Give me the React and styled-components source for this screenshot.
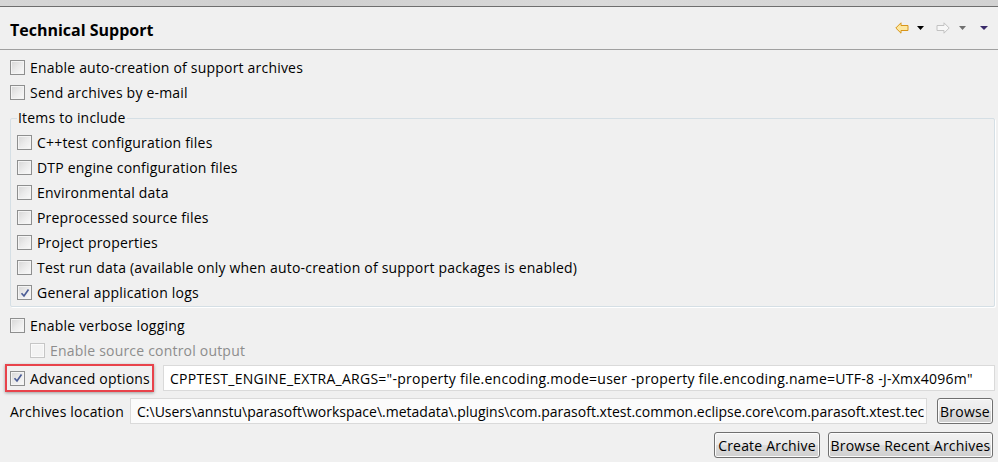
import React from "react";
import styled, { createGlobalStyle, css } from "styled-components";

const Global = createGlobalStyle`
  html, body { margin: 0; padding: 0; background: #f0f0f0; }
  body {
    font-family: "Open Sans", "Segoe UI", sans-serif;
    font-size: 14px;
    letter-spacing: 0.2px;
    color: #000;
    width: 998px;
    height: 462px;
    overflow: hidden;
  }
`;

const Page = styled.div`
  display: flex;
  flex-direction: column;
  width: 998px;
  height: 462px;
  background: #f0f0f0;
  & > * { flex: none; }
`;

const TopStrip = styled.div`
  height: 6px;
  background: linear-gradient(90deg, #d6d6d6, #cfcfcf 30%, #dadada 60%, #d2d2d2);
  border-bottom: 1px solid #6e6e6e;
`;

const Header = styled.div`
  height: 42px;
  display: flex;
  align-items: center;
  justify-content: space-between;
  padding: 0 10px;
  border-bottom: 1px solid #a0a0a0;
`;

const Title = styled.h1`
  margin: 0;
  font-size: 16px;
  font-weight: 700;
  letter-spacing: 0;
  padding-top: 4px;
`;

const Toolbar = styled.div`
  align-self: flex-start;
  display: flex;
  align-items: center;
  padding-top: 15px;
`;

const ToolIcon = styled.span`
  display: inline-flex;
  margin-left: ${(p) => p.$ml || 0}px;
`;

const Content = styled.div`
  display: flex;
  flex-direction: column;
  padding: 5px 3px 0 10px;
`;

const Row = styled.label`
  display: flex;
  align-items: center;
  height: 25px;
  gap: 5px;
  padding-left: ${(p) => p.$indent || 0}px;
  color: ${(p) => (p.$disabled ? "#8d8d8d" : "#000")};
  white-space: nowrap;
`;

const Box = styled.span`
  box-sizing: border-box;
  width: 15px;
  height: 15px;
  flex: none;
  border: 1px solid #8e8f8f;
  background: linear-gradient(135deg, #d6d6d6 0%, #ebebeb 50%, #fafafa 100%);
  box-shadow: inset 0 0 0 1px #f4f4f4;
  display: inline-flex;
  align-items: center;
  justify-content: center;
  ${(p) =>
    p.$disabled &&
    css`
      border-color: #c6c6c6;
      background: #f3f3f3;
      box-shadow: inset 0 0 0 1px #fafafa;
    `}
`;

const Group = styled.fieldset`
  margin: 4px 0 0 0;
  padding: 0 6px 1px 6px;
  border: 1px solid #d5dfe5;
  box-shadow: 1px 1px 0 #ffffff;
  border-radius: 2px;
  width: 985px;
  box-sizing: border-box;
  min-width: 0;
`;

const Legend = styled.legend`
  padding: 0 1px;
  line-height: 18px;
  margin-bottom: 3px;
`;

const Spacer = styled.div`
  height: ${(p) => p.$h}px;
`;

const AdvancedRow = styled.div`
  display: flex;
  align-items: center;
  gap: 9px;
  margin-left: -5px;
  margin-top: 1px;
`;

const Highlight = styled.div`
  box-sizing: border-box;
  width: 149px;
  height: 28px;
  border: 2px solid #e8434b;
  box-shadow: 0 1px 3px rgba(0, 0, 0, 0.35);
  display: flex;
  align-items: center;
  padding-left: 3px;
`;

const Field = styled.div`
  box-sizing: border-box;
  height: 26px;
  flex: ${(p) => (p.$w ? "none" : "1")};
  width: ${(p) => (p.$w ? p.$w + "px" : "auto")};
  border: 1px solid #dadada;
  background: ${(p) => (p.$readonly ? "#fbfbfb" : "#ffffff")};
  display: flex;
  align-items: center;
  padding-left: 6px;
  overflow: hidden;
  white-space: nowrap;
  letter-spacing: ${(p) => (p.$tight ? "0" : "0.25px")};
`;

const FieldText = styled.span`
  overflow: hidden;
  white-space: nowrap;
`;

const LocationRow = styled.div`
  display: flex;
  align-items: center;
  margin-top: 6px;
  gap: 8px;
  height: 26px;
`;

const LocLabel = styled.span`
  width: 112px;
  flex: none;
  white-space: nowrap;
`;

const Button = styled.button`
  box-sizing: border-box;
  height: 26px;
  width: ${(p) => p.$w}px;
  margin-left: ${(p) => p.$ml || 0}px;
  padding: 0;
  font: inherit;
  letter-spacing: inherit;
  color: #000;
  border: 1px solid #707070;
  border-radius: 3px;
  background: linear-gradient(#f2f2f2 0%, #ebebeb 49%, #dddddd 50%, #cfcfcf 100%);
  box-shadow: inset 0 0 0 1px #fcfcfc;
  white-space: nowrap;
  flex: none;
`;

const ButtonRow = styled.div`
  display: flex;
  justify-content: flex-end;
  gap: 8px;
  margin-top: 8px;
  padding-right: 2px;
`;

const Check = () => (
  <svg width="10" height="10" viewBox="0 0 10 10">
    <path d="M1.5 5.2 L4 8 L8.5 1.5" fill="none" stroke="#4b5d96" strokeWidth="1.7" />
  </svg>
);

const CheckRow = ({ children, checked, disabled, indent }) => (
  <Row $disabled={disabled} $indent={indent}>
    <Box $disabled={disabled}>{checked && <Check />}</Box>
    <span>{children}</span>
  </Row>
);

const BackArrow = () => (
  <svg width="14" height="12" viewBox="0 0 14 12">
    <path d="M0.8 6 L6 0.8 L6 3.5 L13 3.5 L13 8.5 L6 8.5 L6 11.2 Z" fill="#fde7a0" stroke="#d8951a" strokeWidth="1" strokeLinejoin="round" />
  </svg>
);

const FwdArrow = () => (
  <svg width="14" height="12" viewBox="0 0 14 12">
    <path d="M13.2 6 L8 0.8 L8 3.5 L1 3.5 L1 8.5 L8 8.5 L8 11.2 Z" fill="#f7f7f7" stroke="#c2c2c2" strokeWidth="1" strokeLinejoin="round" />
  </svg>
);

const Tri = ({ color, w = 7 }) => (
  <svg width={w} height="4" viewBox={`0 0 ${w} 4`}>
    <path d={`M0 0 L${w} 0 L${w / 2} 4 Z`} fill={color} />
  </svg>
);

export default function App() {
  return (
    <Page>
      <Global />
      <TopStrip />
      <Header>
        <Title>Technical Support</Title>
        <Toolbar>
          <ToolIcon><BackArrow /></ToolIcon>
          <ToolIcon $ml={8}><Tri color="#000" /></ToolIcon>
          <ToolIcon $ml={12}><FwdArrow /></ToolIcon>
          <ToolIcon $ml={9}><Tri color="#6f6f6f" /></ToolIcon>
          <ToolIcon $ml={14}><Tri color="#3a2a6a" w={8} /></ToolIcon>
        </Toolbar>
      </Header>
      <Content>
        <CheckRow>Enable auto-creation of support archives</CheckRow>
        <CheckRow>Send archives by e-mail</CheckRow>
        <Group>
          <Legend>Items to include</Legend>
          <CheckRow>C++test configuration files</CheckRow>
          <CheckRow>DTP engine configuration files</CheckRow>
          <CheckRow>Environmental data</CheckRow>
          <CheckRow>Preprocessed source files</CheckRow>
          <CheckRow>Project properties</CheckRow>
          <CheckRow>Test run data (available only when auto-creation of support packages is enabled)</CheckRow>
          <CheckRow checked>General application logs</CheckRow>
        </Group>
        <Spacer $h={6} />
        <CheckRow>Enable verbose logging</CheckRow>
        <CheckRow disabled indent={20}>Enable source control output</CheckRow>
        <AdvancedRow>
          <Highlight>
            <CheckRow checked>Advanced options</CheckRow>
          </Highlight>
          <Field><FieldText>CPPTEST_ENGINE_EXTRA_ARGS="-property file.encoding.mode=user -property file.encoding.name=UTF-8 -J-Xmx4096m"</FieldText></Field>
        </AdvancedRow>
        <LocationRow>
          <LocLabel>Archives location</LocLabel>
          <Field $readonly $tight $w={797}><FieldText>C:\Users\annstu\parasoft\workspace\.metadata\.plugins\com.parasoft.xtest.common.eclipse.core\com.parasoft.xtest.tec</FieldText></Field>
          <Button $w={56} $ml={2}>Browse</Button>
        </LocationRow>
        <ButtonRow>
          <Button $w={106}>Create Archive</Button>
          <Button $w={165}>Browse Recent Archives</Button>
        </ButtonRow>
      </Content>
    </Page>
  );
}
